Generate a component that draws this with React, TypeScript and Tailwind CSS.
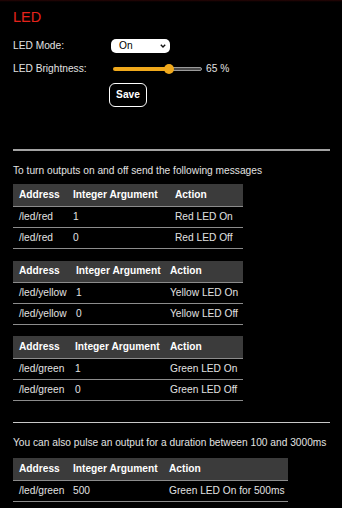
import React from "react";

interface Row {
  address: string;
  arg: string;
  action: string;
}

interface OscTableProps {
  rows: Row[];
  width: string;
  cols: [string, string, string];
}

function OscTable({ rows, width, cols }: OscTableProps) {
  return (
    <table className={`table-fixed border-collapse ${width}`}>
      <thead>
        <tr className="bg-[#3b3b3b] border-b border-[#8c8c8c]">
          <th className={`${cols[0]} h-[22px] px-[6px] text-left font-bold text-white`}>Address</th>
          <th className={`${cols[1]} px-[6px] text-left font-bold text-white whitespace-nowrap`}>Integer Argument</th>
          <th className={`${cols[2]} px-[6px] text-left font-bold text-white`}>Action</th>
        </tr>
      </thead>
      <tbody>
        {rows.map((r, i) => (
          <tr key={i} className="border-b-[1.5px] border-[#8c8c8c]">
            <td className="h-[21px] px-[6px] whitespace-nowrap">{r.address}</td>
            <td className="px-[6px]">{r.arg}</td>
            <td className="px-[6px] whitespace-nowrap">{r.action}</td>
          </tr>
        ))}
      </tbody>
    </table>
  );
}

export default function App() {
  return (
    <div className="min-h-screen bg-black text-[#e2e2e2] font-['Liberation_Sans',Arial,sans-serif] text-[10.2px] leading-[12px]">
      <div className="h-[3px] bg-gradient-to-b from-[#2a0707] to-black" />
      <div className="pl-[13px] pr-[12px] pb-[10px]">
        <h1 className="mt-[6px] text-[14.5px] leading-[17px] text-[#e5231b]">LED</h1>

        {/* Settings */}
        <div className="mt-[13px] flex items-center h-[14px]">
          <span className="w-[98px]">LED Mode:</span>
          <div className="w-[59px] h-[14px] bg-white rounded-[5px] flex items-center justify-between pl-[8px] pr-[4px] text-black">
            <span>On</span>
            <svg width="6" height="4" viewBox="0 0 6 4">
              <path d="M0.8 0.8 L3 3 L5.2 0.8" fill="none" stroke="#111" strokeWidth="1.4" />
            </svg>
          </div>
        </div>

        <div className="mt-[9px] flex items-center h-[14px]">
          <span className="w-[100px]">LED Brightness:</span>
          <div className="relative w-[89px] h-[4px] flex">
            <div className="w-[56px] h-full bg-[#f0a91c] rounded-l-full" />
            <div className="flex-1 h-full bg-[#4a4a4a] border border-[#9a9a9a] rounded-r-full" />
            <div className="absolute left-[51px] top-[-3px] w-[10px] h-[10px] rounded-full bg-[#f0a91c]" />
          </div>
          <span className="ml-[4px]">65 %</span>
        </div>

        <button
          type="button"
          className="mt-[7px] ml-[96px] w-[38px] h-[24px] rounded-[6px] border-[1.5px] border-white bg-black text-white font-bold text-[10.2px]"
        >
          Save
        </button>

        <hr className="mt-[42px] border-0 h-[2px] bg-[#a3a3a3]" />

        <p className="mt-[14px]">To turn outputs on and off send the following messages</p>
        <div className="mt-[7px]">
          <OscTable
            width="w-[230px]"
            cols={["w-[54px]", "w-[102px]", "w-[74px]"]}
            rows={[
              { address: "/led/red", arg: "1", action: "Red LED On" },
              { address: "/led/red", arg: "0", action: "Red LED Off" },
            ]}
          />
        </div>
        <div className="mt-[12px]">
          <OscTable
            width="w-[230px]"
            cols={["w-[57px]", "w-[94px]", "w-[79px]"]}
            rows={[
              { address: "/led/yellow", arg: "1", action: "Yellow LED On" },
              { address: "/led/yellow", arg: "0", action: "Yellow LED Off" },
            ]}
          />
        </div>
        <div className="mt-[11px]">
          <OscTable
            width="w-[230px]"
            cols={["w-[56px]", "w-[95px]", "w-[79px]"]}
            rows={[
              { address: "/led/green", arg: "1", action: "Green LED On" },
              { address: "/led/green", arg: "0", action: "Green LED Off" },
            ]}
          />
        </div>

        <hr className="mt-[21px] border-0 h-[1.5px] bg-[#c8c8c8]" />

        <p className="mt-[14px]">You can also pulse an output for a duration between 100 and 3000ms</p>
        <div className="mt-[9px]">
          <OscTable
            width="w-[275px]"
            cols={["w-[54px]", "w-[96px]", "w-[125px]"]}
            rows={[{ address: "/led/green", arg: "500", action: "Green LED On for 500ms" }]}
          />
        </div>
      </div>
    </div>
  );
}
